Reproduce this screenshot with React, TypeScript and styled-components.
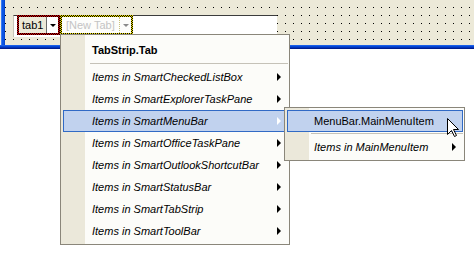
import styled, { createGlobalStyle } from "styled-components";

const GlobalStyle = createGlobalStyle`
  html, body {
    margin: 0;
    padding: 0;
    background: #fff;
  }
  body {
    font-family: "Liberation Sans", Arial, sans-serif;
    font-size: 11px;
    color: #000;
  }
`;

const Designer = styled.div`
  position: relative;
  width: 474px;
  height: 253px;
  overflow: hidden;
  background: #fff;
`;

// form surface: beige with the 8px grid dots, blue frame at left and bottom
const Form = styled.div`
  height: 49px;
  box-sizing: border-box;
  padding: 15px 0 0 13px;
  background-color: #ece9d8;
  background-image:
    linear-gradient(to bottom, #1a5fe8 0 1px, #0446d6 1px 2px, #0233b8 2px 3px, #001d8e 3px 4px),
    linear-gradient(to right, #f3f1e8 0 1px, #3a7cf2 1px 2px, #0b55e4 2px 4px, #0645cc 4px 5px),
    conic-gradient(at 1px 1px, transparent 75%, #000 0);
  background-size: 100% 4px, 5px 100%, 8px 8px;
  background-position: left 0 bottom 0, 0 0, 5px 7px;
  background-repeat: no-repeat, no-repeat, repeat;
`;

const TabStrip = styled.div`
  display: flex;
  width: 264px;
  height: 22px;
  box-sizing: border-box;
  padding-left: 3px;
  background: #fff;
  border-top: 1px solid #3c3c3c;
  border-left: 1px solid #c8c5b8;
`;

const Tab = styled.div<{ $mark: string; $width: number }>`
  display: flex;
  margin-top: -1px;
  width: ${({ $width }) => $width}px;
  height: 20px;
  box-sizing: border-box;
  padding: 2px;
  background: repeating-conic-gradient(#000 0 25%, ${({ $mark }) => $mark} 0 50%) 0 0 / 2px 2px;
`;

const TabLabel = styled.div<{ $ghost?: boolean }>`
  flex: 1;
  display: flex;
  align-items: center;
  padding-left: ${({ $ghost }) => ($ghost ? 4 : 3)}px;
  background: ${({ $ghost }) => ($ghost ? "#fdfdfb" : "#ece9d8")};
  color: ${({ $ghost }) => ($ghost ? "#c4c4c4" : "#000")};
  white-space: nowrap;
`;

const DropButton = styled.div<{ $ghost?: boolean }>`
  display: flex;
  align-items: center;
  justify-content: center;
  width: 11px;
  background: ${({ $ghost }) => ($ghost ? "#fdfdfb" : "#fff")};
  border-left: 1px ${({ $ghost }) => ($ghost ? "dotted #c9c27a" : "solid #6b6b6b")};

  &::after {
    content: "";
    border-top: 3px solid ${({ $ghost }) => ($ghost ? "#8a8a8a" : "#000")};
    border-left: 3px solid transparent;
    border-right: 3px solid transparent;
  }
`;

const Menu = styled.div<{ $left: number; $top: number; $width: number }>`
  position: absolute;
  left: ${({ $left }) => $left}px;
  top: ${({ $top }) => $top}px;
  width: ${({ $width }) => $width}px;
  box-sizing: border-box;
  padding: 2px 1px 2px 2px;
  border: 1px solid #8a867a;
  background: linear-gradient(to right, #ebe8da 0 24px, #fcfcf9 24px);
`;

const Item = styled.div<{ $active?: boolean; $bold?: boolean; $sub?: boolean; $indent: number }>`
  display: flex;
  align-items: center;
  justify-content: space-between;
  height: ${({ $bold }) => ($bold ? 25 : 22)}px;
  box-sizing: border-box;
  padding: 0 6px 0 ${({ $indent }) => $indent}px;
  border: 1px solid ${({ $active }) => ($active ? "#316ac5" : "transparent")};
  background: ${({ $active }) => ($active ? "#c1d2ee" : "transparent")};
  font-weight: ${({ $bold }) => ($bold ? "bold" : "normal")};
  font-style: ${({ $sub }) => ($sub ? "italic" : "normal")};
  white-space: nowrap;
`;

const Arrow = styled.span<{ $light?: boolean }>`
  border-left: 4px solid ${({ $light }) => ($light ? "#fff" : "#000")};
  border-top: 4px solid transparent;
  border-bottom: 4px solid transparent;
`;

const Separator = styled.div<{ $indent: number }>`
  height: 1px;
  margin: 1px 0 2px ${({ $indent }) => $indent}px;
  background: #c5c2b8;
`;

const Cursor = styled.svg`
  position: absolute;
  left: 447px;
  top: 118px;
`;

const items = [
  "SmartCheckedListBox",
  "SmartExplorerTaskPane",
  "SmartMenuBar",
  "SmartOfficeTaskPane",
  "SmartOutlookShortcutBar",
  "SmartStatusBar",
  "SmartTabStrip",
  "SmartToolBar",
];

export default function App() {
  return (
    <>
      <GlobalStyle />
      <Designer>
        <Form>
          <TabStrip>
            <Tab $mark="#e00000" $width={43}>
              <TabLabel>tab1</TabLabel>
              <DropButton />
            </Tab>
            <Tab $mark="#f0e000" $width={73}>
              <TabLabel $ghost>[New Tab]</TabLabel>
              <DropButton $ghost />
            </Tab>
          </TabStrip>
        </Form>

        <Menu $left={60} $top={34} $width={230}>
          <Item $bold $indent={28}>TabStrip.Tab</Item>
          <Separator $indent={27} />
          {items.map((name) => (
            <Item key={name} $sub $indent={28} $active={name === "SmartMenuBar"}>
              <span>Items in {name}</span>
              <Arrow $light={name === "SmartMenuBar"} />
            </Item>
          ))}
        </Menu>

        <Menu $left={284} $top={107} $width={181}>
          <Item $active $indent={26}>MenuBar.MainMenuItem</Item>
          <Separator $indent={24} />
          <Item $sub $indent={26}>
            <span>Items in MainMenuItem</span>
            <Arrow />
          </Item>
        </Menu>

        <Cursor width="13" height="20" viewBox="0 0 13 20">
          <path
            d="M0.5 0.5 L0.5 16.5 L4.5 12.5 L7.5 18.5 L9.5 17.5 L6.5 11.5 L11.5 11.5 Z"
            fill="#fff"
            stroke="#000"
            strokeWidth="1"
          />
        </Cursor>
      </Designer>
    </>
  );
}
